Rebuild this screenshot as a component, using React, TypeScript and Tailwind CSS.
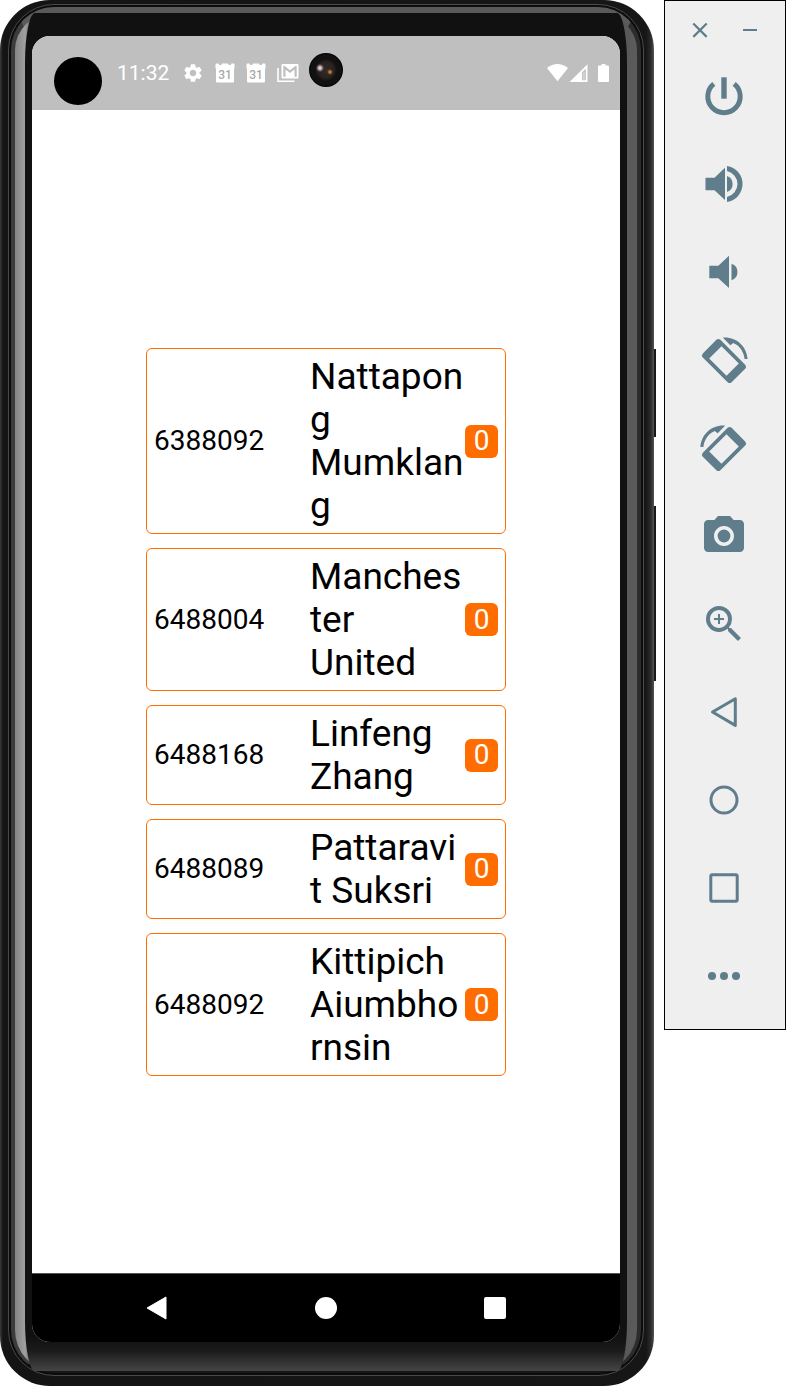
import React from "react";
import { MdPhotoCamera, MdSettings, MdZoomIn } from "react-icons/md";

type Student = { id: string; name: string; score: number };

const students: Student[] = [
  { id: "6388092", name: "Nattapong Mumklang", score: 0 },
  { id: "6488004", name: "Manchester United", score: 0 },
  { id: "6488168", name: "Linfeng Zhang", score: 0 },
  { id: "6488089", name: "Pattaravit Suksri", score: 0 },
  { id: "6488092", name: "Kittipich Aiumbhornsin", score: 0 },
];

function Glyph({ children }: { children: React.ReactNode }) {
  return (
    <svg viewBox="0 0 48 48" className="size-12" fill="currentColor" aria-hidden="true">
      {children}
    </svg>
  );
}

function Rotation() {
  return (
    <>
      <path
        fillRule="evenodd"
        d="M16.4 3.8q2-1.7 4 0L45.2 28.8q1.7 2 0 4L31.6 46.2q-2 1.7-4 0L2.8 21.4q-1.7-2 0-4ZM21.5 10.2L9.2 22.5 26.5 39.8 38.8 27.5Z"
      />
      <path d="M22.700 1.600C36 .4 46.600 10 47.600 23h-3C43.800 15.400 39.600 9.600 33.400 6.900L30.300 9.200Z" />
    </>
  );
}

const tools: { label: string; icon: React.ReactNode }[] = [
  {
    label: "Power",
    icon: (
      <Glyph>
        <path d="M21.300 5.300h5.400v21.400h-5.400Z" />
        <path d="M13.800 11.900a16.200 16.200 0 1 0 20.400 0" fill="none" stroke="currentColor" strokeWidth="5" />
      </Glyph>
    ),
  },
  {
    label: "Volume up",
    icon: (
      <Glyph>
        <path d="M5.5 17.7h9L25 7.7V40L14.5 30.3h-9Z" />
        <path d="M27 16a8.5 8.5 0 0 1 0 16Z" />
        <path d="M27 6a18.2 18.2 0 0 1 0 36v-5a13.3 13.3 0 0 0 0-26Z" />
      </Glyph>
    ),
  },
  {
    label: "Volume down",
    icon: (
      <Glyph>
        <path d="M9.3 17.7h9L29 7.7V40L18.3 30.3h-9Z" />
        <path d="M31.5 15.7a8.7 8.7 0 0 1 0 16.5Z" />
      </Glyph>
    ),
  },
  { label: "Rotate left", icon: <Glyph><Rotation /></Glyph> },
  { label: "Rotate right", icon: <Glyph><g transform="translate(48 0) scale(-1 1)"><Rotation /></g></Glyph> },
  { label: "Take screenshot", icon: <MdPhotoCamera className="size-12" /> },
  { label: "Zoom", icon: <MdZoomIn className="size-12" /> },
  {
    label: "Back",
    icon: <Glyph><path d="M12.5 24L35.3 10.8v26.6Z" fill="none" stroke="currentColor" strokeWidth="3" strokeLinejoin="round" /></Glyph>,
  },
  {
    label: "Home",
    icon: <Glyph><circle cx="24" cy="24" r="13" fill="none" stroke="currentColor" strokeWidth="3" /></Glyph>,
  },
  {
    label: "Overview",
    icon: <Glyph><rect x="10.8" y="10.8" width="26.4" height="26.4" rx="1.5" fill="none" stroke="currentColor" strokeWidth="3" /></Glyph>,
  },
  {
    label: "More",
    icon: (
      <Glyph>
        <circle cx="12" cy="24" r="4" />
        <circle cx="24" cy="24" r="4" />
        <circle cx="36" cy="24" r="4" />
      </Glyph>
    ),
  },
];

function CalendarIcon() {
  return (
    <svg viewBox="0 0 20 20" className="size-5" aria-hidden="true">
      <path fill="#fff" d="M1.500 0.500h2l.8 1.500h2l.8-1.500h5.800l.8 1.500h2l.8-1.500h2q1 0 1 1v3.500L19 6V18.500q0 1-1 1H2q-1 0-1-1V6L.5 5V1.500q0-1 1-1Z" />
      <text x="10" y="16" textAnchor="middle" fontSize="12" fontWeight="500" fill="#a8a8a8" fontFamily="Roboto, sans-serif">31</text>
    </svg>
  );
}

function StatusBar() {
  return (
    <header className="flex h-[74px] items-center bg-[#bfbfbf] pr-[11px] pl-[22px] text-white">
      <span className="mt-4 size-12 rounded-full bg-black" />
      <time className="ml-[15px] w-[51px] text-[21px] leading-6">11:32</time>
      <div className="ml-[14px] flex items-center gap-[11px]">
        <MdSettings className="size-[22px]" />
        <CalendarIcon />
        <CalendarIcon />
        <svg viewBox="0 0 22 20" className="h-5 w-[22px]" aria-hidden="true">
          <path fill="none" stroke="#fff" strokeWidth="1.600" d="M1 5v13.200h16.500" />
          <path fill="#fff" fillRule="evenodd" d="M5.500 1h15q1 0 1 1v12.500q0 1-1 1h-15q-1 0-1-1V2q0-1 1-1ZM6.300 3v10.700h2.200V6.500L13 10l4.500-3.500v7.200h2.200V3h-1.400L13 7.200 7.700 3Z" />
        </svg>
      </div>
      <svg viewBox="0 0 62 18" className="ml-auto h-[18px] w-[62px]" fill="#fff" aria-hidden="true">
        <path d="M0 4Q10.500-4 21 4L10.500 17.300Z" />
        <path fillRule="evenodd" d="M22.500 18L40.500.3V18ZM35 8.500v7.800h3.800V4.700Z" />
        <path d="M35.800 8.500h2v7.800h-2Z" fillOpacity=".35" />
        <path d="M54.500 0h4v1.500H61q1 0 1 1V17q0 1-1 1h-9q-1 0-1-1V2.500q0-1 1-1h2.500Z" />
      </svg>
    </header>
  );
}

function StudentCard({ id, name, score }: Student) {
  return (
    <li className="flex items-center rounded-md border border-[#ff6d00] px-[7px] py-[6px]">
      <span className="w-[156px] shrink-0 text-[28px] leading-8">{id}</span>
      <span className="min-w-0 flex-1 text-[37px] leading-[43px] wrap-break-word">{name}</span>
      <span className="flex h-[33px] w-[33px] shrink-0 items-center justify-center rounded-md bg-[#ff6d00] text-[28px] text-white">
        {score}
      </span>
    </li>
  );
}

function NavigationBar() {
  return (
    <nav className="flex h-[69px] items-center justify-center gap-[147px] border-t border-[#555] bg-black text-white">
      <button type="button" aria-label="Back">
        <svg viewBox="0 0 22 24" className="h-6 w-[22px]" aria-hidden="true">
          <path d="M1 12L20 1v22Z" fill="#fff" stroke="#fff" strokeLinejoin="round" />
        </svg>
      </button>
      <button type="button" aria-label="Home" className="size-[22px] rounded-full bg-white" />
      <button type="button" aria-label="Overview" className="size-[22px] rounded-[2px] bg-white" />
    </nav>
  );
}

function Phone() {
  return (
    <div className="relative min-w-0 flex-1">
      <span className="absolute top-[349px] -right-[2px] h-[88px] w-2 bg-[#191919]" />
      <span className="absolute top-[506px] -right-[2px] h-[175px] w-2 bg-[#191919]" />
      <div className="relative rounded-[50px] bg-[linear-gradient(to_right,#3a3a3a_0,#141414_3px,#161616_calc(100%_-_8px),#2c2c2c_calc(100%_-_3px),#555_100%)] pt-1 pr-[10px] pb-[10px] pl-2">
        <div className="rounded-[46px] border border-[#4a4a4a] bg-[#0c0c0c] p-[2px]">
          <div className="rounded-[43px] border-x-4 border-t-[6px] border-b-2 border-t-[#5a5a5a] border-r-[#2c2c2c] border-b-[#161616] border-l-[#3c3c3c] bg-[linear-gradient(to_right,#858585_0,#a0a0a0_10px,#4a4a4a_20px,#555_calc(100%_-_20px),#5c5c5c_100%)]">
            <div className="mx-[10px] rounded-[10px/50px] bg-[linear-gradient(to_bottom,#111_0,#111_calc(100%_-_34px),#1b1b1b_calc(100%_-_20px),#454545_100%)] px-[7px] pt-[23px] pb-[29px]">
              <div className="relative overflow-hidden rounded-[18px] bg-white font-[Roboto,sans-serif] text-black">
                <StatusBar />
                <span className="absolute top-[17px] left-1/2 size-[34px] -translate-x-1/2 rounded-full bg-[radial-gradient(circle_at_11px_15px,#fff_0,#a890a0_2px,transparent_4px),radial-gradient(circle_at_21px_19px,#f09838_0,transparent_3px),radial-gradient(circle_at_50%_50%,#352b26_0,#29221f_8px,#111_11px,#111_15px,#000_17px)]" />
                <main className="px-[114px] pt-[238px] pb-[197px]">
                  <ul className="flex flex-col gap-[14px]">
                    {students.map((student) => (
                      <StudentCard key={student.id} {...student} />
                    ))}
                  </ul>
                </main>
                <NavigationBar />
              </div>
            </div>
          </div>
        </div>
      </div>
    </div>
  );
}

function EmulatorToolbar() {
  return (
    <aside className="w-[122px] shrink-0 self-start border border-black bg-[#efefef] pt-[18px] pb-[9px] text-[#607d8b]">
      <div className="flex justify-center gap-[26px] pb-[9px]">
        <button type="button" aria-label="Close" className="size-6">
          <svg viewBox="0 0 24 24" className="size-6" stroke="currentColor" strokeWidth="2.200" aria-hidden="true">
            <path d="M5.300 4.500l13.400 13.400M18.700 4.500L5.300 17.900" />
          </svg>
        </button>
        <button type="button" aria-label="Minimize" className="size-6">
          <svg viewBox="0 0 24 24" className="size-6" stroke="currentColor" strokeWidth="2" aria-hidden="true">
            <path d="M5 11h14" />
          </svg>
        </button>
      </div>
      <div className="flex flex-col pr-[2px]">
        {tools.map(({ label, icon }) => (
          <button key={label} type="button" aria-label={label} className="flex h-[88px] items-center justify-center">
            {icon}
          </button>
        ))}
      </div>
    </aside>
  );
}

export default function App() {
  return (
    <div className="flex gap-[10px] bg-white">
      <Phone />
      <EmulatorToolbar />
    </div>
  );
}
